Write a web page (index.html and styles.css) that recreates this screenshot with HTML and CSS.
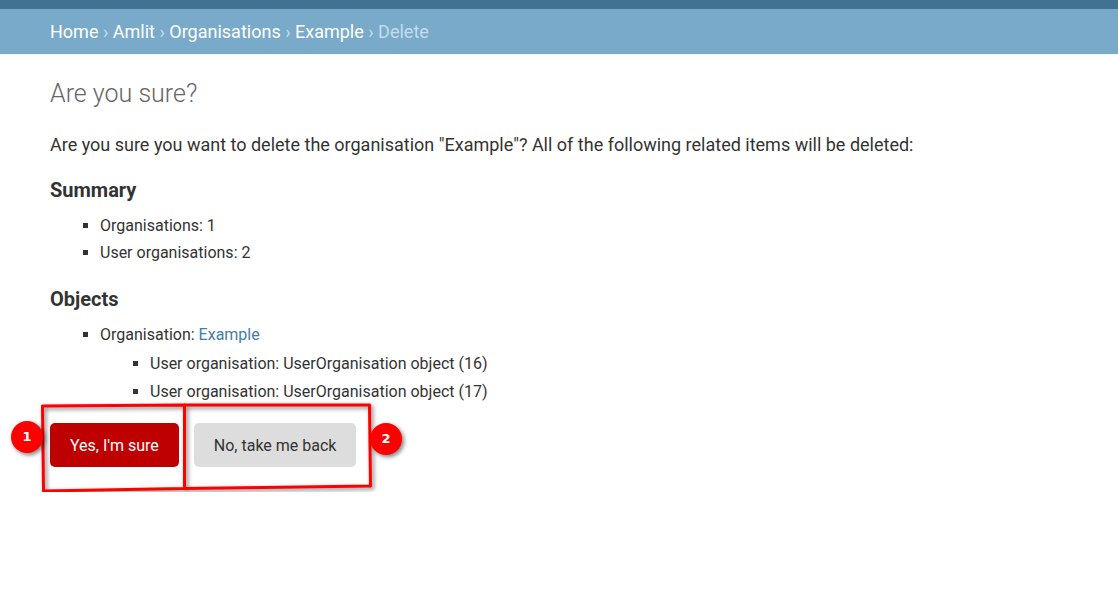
FILE: index.html
```html
<!DOCTYPE html>
<html lang="en">
<head>
<meta charset="utf-8">
<title>Are you sure?</title>
<link rel="stylesheet" href="styles.css">
</head>
<body>
<header class="topbar"></header>
<nav class="breadcrumbs" aria-label="Breadcrumbs">
<a href="#">Home</a> › <a href="#">Amlit</a> › <a href="#">Organisations</a> › <a href="#">Example</a> › Delete
</nav>
<main class="content">
<h1>Are you sure?</h1>
<p>Are you sure you want to delete the organisation "Example"? All of the following related items will be deleted:</p>
<h2>Summary</h2>
<ul class="summary">
<li>Organisations: 1</li>
<li>User organisations: 2</li>
</ul>
<h2>Objects</h2>
<ul class="objects">
<li>Organisation: <a href="#">Example</a>
<ul>
<li>User organisation: UserOrganisation object (16)</li>
<li>User organisation: UserOrganisation object (17)</li>
</ul>
</li>
</ul>
<form class="actions">
<button type="button" class="button confirm">Yes, I'm sure</button>
<button type="button" class="button cancel">No, take me back</button>
<svg class="outline" width="340" height="100" viewBox="0 0 340 100" fill="none" stroke="#f00" stroke-width="3" stroke-linejoin="round" aria-hidden="true">
<path d="M2.500 6L144.500 5V88.500L3.500 91Z"/>
<path d="M144.500 5L329.500 5L330.500 86L144.500 88.500Z"/>
</svg>
<span class="marker first">1</span>
<span class="marker second">2</span>
</form>
</main>
</body>
</html>
```
FILE: styles.css
```css
body {
  margin: 0;
  background: #fff;
  color: #333;
  font-family: Roboto, "Liberation Sans", sans-serif;
  font-size: 16px;
}
a {
  color: #447ea8;
  text-decoration: none;
}
.topbar {
  height: 9px;
  background: #417291;
}
.breadcrumbs {
  padding: 12px 50px;
  background: #79aaca;
  color: #c4dcec;
  font-size: 18px;
  line-height: 21px;
}
.breadcrumbs a {
  color: #fff;
}
.content {
  padding: 25px 50px;
}
h1 {
  margin: 0 0 24px;
  color: #666;
  font-size: 25px;
  font-weight: 300;
  line-height: 30px;
}
p {
  margin: 0 0 20px;
  font-size: 18px;
  line-height: 24px;
}
h2 {
  margin: 0 0 9px;
  font-size: 20px;
  font-weight: 700;
  line-height: 26px;
}
ul {
  margin: 0;
  padding: 0 0 0 50px;
  list-style: square;
  line-height: 27px;
}
.summary {
  margin-bottom: 20px;
}
.objects ul {
  margin-top: 2px;
  line-height: 28px;
}
.actions {
  position: relative;
  display: flex;
  align-items: center;
  gap: 15px;
  margin-top: 17px;
}
.button {
  height: 44px;
  padding: 0 20px;
  border: 0;
  border-radius: 5px;
  font: inherit;
}
.confirm {
  background: #be0000;
  color: #fff;
}
.cancel {
  background: #ddd;
  color: #333;
}
.outline {
  position: absolute;
  top: -23px;
  left: -10px;
  overflow: visible;
  filter: drop-shadow(2px 2px 2px rgb(0 0 0 / 50%));
  pointer-events: none;
}
.marker {
  position: absolute;
  width: 32px;
  height: 32px;
  border-radius: 50%;
  background: #f00;
  box-shadow: 2px 2px 4px rgb(0 0 0 / 50%);
  color: #fff;
  font: bold 13px/32px "DejaVu Sans", sans-serif;
  text-align: center;
}
.first {
  top: -2px;
  left: -39px;
}
.second {
  top: 0;
  left: 320px;
}
```
